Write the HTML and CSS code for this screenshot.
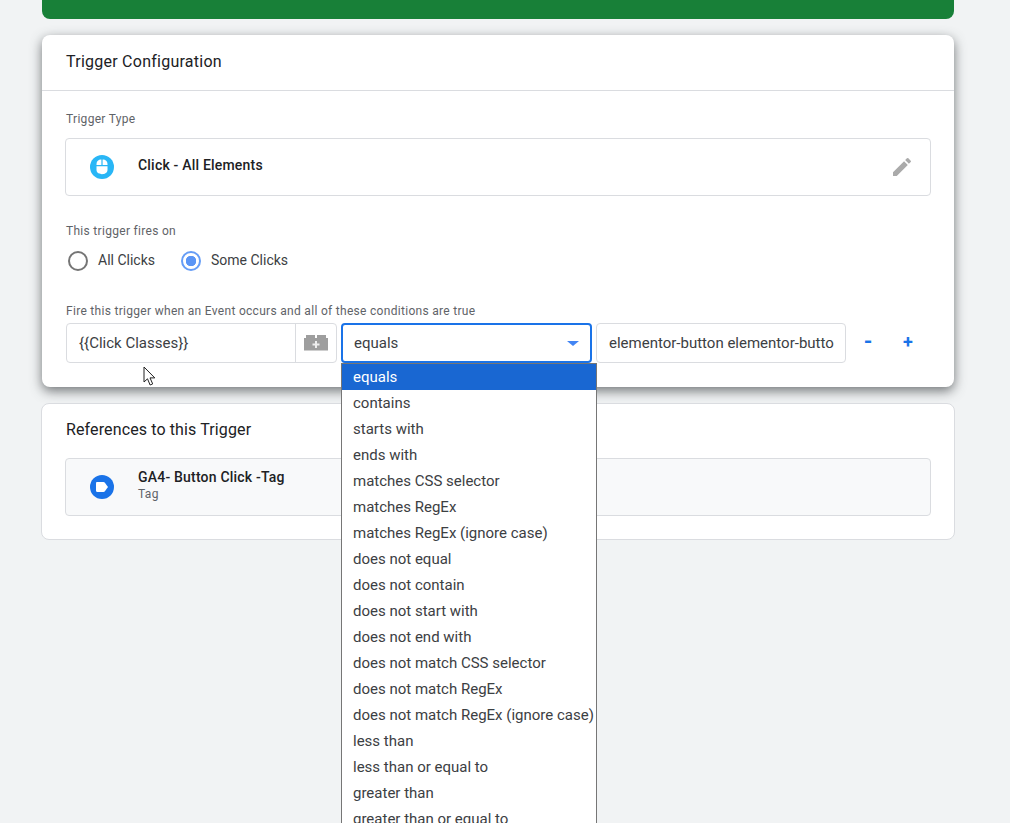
FILE: index.html
```html
<!DOCTYPE html>
<html lang="en">
<head>
<meta charset="utf-8">
<title>Trigger Configuration</title>
<link rel="stylesheet" href="styles.css">
</head>
<body>
<main class="page">
  <div class="banner"></div>

  <section class="card card-raised">
    <h2 class="card-head">Trigger Configuration</h2>
    <div class="card-body">
      <div class="label label-type">Trigger Type</div>
      <div class="type-box">
        <span class="circle circle-click">
          <svg width="14" height="16" viewBox="0 0 14 16"><path fill="#fff" d="M6.400 .6H6C3.600 .6 1.500 2.400 1.500 5v1h4.900zM7.600 .6H8c2.400 0 4.500 1.800 4.500 4.400v1H7.600zM1.500 7.200h11V11c0 2.400-2.500 4.200-5.500 4.200S1.500 13.400 1.500 11z"/></svg>
        </span>
        <span class="type-name">Click - All Elements</span>
        <svg class="pencil" width="24" height="24" viewBox="0 0 24 24"><path fill="#aaa" d="M3 17.250V21h3.750L17.810 9.940l-3.750-3.750L3 17.250zM20.710 7.040a1 1 0 0 0 0-1.410l-2.340-2.340a1 1 0 0 0-1.410 0l-1.830 1.830 3.750 3.750 1.830-1.830z"/></svg>
      </div>

      <div class="label label-fires">This trigger fires on</div>
      <div class="radios">
        <span class="radio"></span><span class="radio-text">All Clicks</span>
        <span class="radio radio-on"></span><span class="radio-text">Some Clicks</span>
      </div>

      <div class="label label-cond">Fire this trigger when an Event occurs and all of these conditions are true</div>
      <div class="cond-row">
        <div class="var-field">
          <span class="var-text">{{Click Classes}}</span>
          <span class="var-btn">
            <svg width="24" height="16" viewBox="0 0 24 16"><path fill="#9e9e9e" d="M2 0h9v3h2V0h9v3h2v12.500H0V3h2z"/><path fill="#eee" d="M11 6h2v2.500h2.500v2H13V13h-2v-2.500H8.500v-2H11z"/></svg>
          </span>
        </div>
        <div class="select-wrap">
          <div class="select-box">
            <span>equals</span>
            <span class="arrow"></span>
          </div>
          <ul class="menu">
            <li class="menu-on">equals</li>
            <li>contains</li>
            <li>starts with</li>
            <li>ends with</li>
            <li>matches CSS selector</li>
            <li>matches RegEx</li>
            <li>matches RegEx (ignore case)</li>
            <li>does not equal</li>
            <li>does not contain</li>
            <li>does not start with</li>
            <li>does not end with</li>
            <li>does not match CSS selector</li>
            <li>does not match RegEx</li>
            <li>does not match RegEx (ignore case)</li>
            <li>less than</li>
            <li>less than or equal to</li>
            <li>greater than</li>
            <li>greater than or equal to</li>
          </ul>
        </div>
        <div class="value-field">elementor-button elementor-butto</div>
        <div class="pm">
          <span class="pm-btn pm-minus">-</span>
          <span class="pm-btn">+</span>
        </div>
      </div>
    </div>
  </section>

  <section class="card card-flat">
    <h2 class="ref-title">References to this Trigger</h2>
    <div class="ref-box">
      <span class="circle circle-tag">
        <svg width="14" height="12" viewBox="0 0 14 12"><path fill="#fff" d="M2.200 1h6.300c.5 0 .9.200 1.200.500L13 6l-3.300 4.500c-.3.300-.7.500-1.200.500H2.200C1.500 11 1 10.500 1 9.800V2.200C1 1.500 1.500 1 2.200 1z"/></svg>
      </span>
      <span class="ref-text">
        <span class="ref-name">GA4- Button Click -Tag</span>
        <span class="ref-sub">Tag</span>
      </span>
    </div>
  </section>
</main>

<svg class="pointer" width="14" height="21" viewBox="0 0 14 21"><path fill="#fff" stroke="#222" stroke-width="1" d="M1 1v15l3.500-3.200 2.600 6.200 2.600-1.100-2.700-6h4.800z"/></svg>
</body>
</html>
```
FILE: styles.css
```css
html, body {
  margin: 0;
  height: 823px;
  overflow: hidden;
  background: #f1f3f4;
  font-family: Roboto, "Liberation Sans", sans-serif;
  color: #202124;
}
.page {
  width: 912px;
  margin-left: 42px;
  display: flex;
  flex-direction: column;
}
.banner {
  height: 19px;
  background: #188038;
  border-radius: 0 0 8px 8px;
  margin-bottom: 16px;
}
.card {
  background: #fff;
  border-radius: 8px;
}
.card-raised {
  box-shadow: 0 4px 12px rgba(60, 64, 67, .7);
  margin-bottom: 16px;
}
.card-flat {
  margin-left: -1px;
  width: 914px;
  box-sizing: border-box;
  border: 1px solid #dadce0;
  padding: 0 23px 23px 24px;
}
.card-head {
  margin: 0;
  height: 56px;
  padding-left: 24px;
  line-height: 53px;
  font-size: 16px;
  font-weight: 400;
  letter-spacing: .25px;
  border-bottom: 1px solid #dadce0;
  box-sizing: border-box;
}
.card-body {
  padding: 0 23px 24px 23px;
}
.label {
  font-size: 12px;
  line-height: 16px;
  color: #5f6368;
  padding-left: 1px;
  letter-spacing: .3px;
}
.label-type { padding-top: 20px; margin-bottom: 11px; }
.label-fires { margin-top: 27px; }
.label-cond { margin-top: 32px; margin-bottom: 4px; }
.type-box, .ref-box {
  height: 58px;
  box-sizing: border-box;
  border: 1px solid #dadce0;
  border-radius: 4px;
  display: flex;
  align-items: center;
  padding-left: 24px;
}
.ref-box { background: #f8f9fa; }
.circle {
  width: 24px;
  height: 24px;
  border-radius: 50%;
  flex: none;
  display: flex;
  align-items: center;
  justify-content: center;
  margin-right: 24px;
}
.circle-click { background: #29b6f6; }
.circle-tag { background: #1a73e8; }
.type-name, .ref-name {
  font-size: 14px;
  font-weight: 500;
  letter-spacing: .2px;
  color: #202124;
}
.type-name { flex: 1; padding-bottom: 4px; }
.pencil { margin-right: 16px; }
.radios {
  display: flex;
  align-items: center;
  height: 20px;
  margin-top: 12px;
  padding-left: 3px;
}
.radio {
  width: 20px;
  height: 20px;
  box-sizing: border-box;
  border: 2px solid #757575;
  border-radius: 50%;
  flex: none;
  margin-right: 10px;
}
.radio-on {
  border-color: #669df6;
  background: radial-gradient(circle, #5b95f5 0 5px, #fff 5.500px);
}
.radio-text {
  font-size: 14px;
  color: #3c4043;
  margin-right: 26px;
  padding-bottom: 2px;
}
.cond-row {
  display: flex;
  align-items: flex-start;
  height: 40px;
  padding-left: 1px;
}
.var-field {
  width: 271px;
  height: 40px;
  box-sizing: border-box;
  border: 1px solid #dadce0;
  border-radius: 4px;
  display: flex;
  margin-right: 4px;
}
.var-text {
  flex: 1;
  padding-left: 12px;
  font-size: 15px;
  line-height: 38px;
  color: #3c4043;
}
.var-btn {
  width: 40px;
  border-left: 1px solid #dadce0;
  display: flex;
  align-items: center;
  justify-content: center;
}
.select-wrap {
  position: relative;
  width: 251px;
  margin-right: 4px;
  flex: none;
}
.select-box {
  height: 40px;
  box-sizing: border-box;
  border: 2px solid #1a73e8;
  border-radius: 4px;
  display: flex;
  align-items: center;
  justify-content: space-between;
  padding: 0 11px 0 11px;
  font-size: 15px;
  color: #3c4043;
}
.arrow {
  width: 0;
  height: 0;
  border-left: 6px solid transparent;
  border-right: 6px solid transparent;
  border-top: 5px solid #4285f4;
}
.menu {
  position: absolute;
  left: 0;
  top: 40px;
  width: 256px;
  box-sizing: border-box;
  margin: 0;
  padding: 0;
  list-style: none;
  background: #fff;
  border: 1px solid #767676;
  font-size: 15px;
  color: #3c4043;
  z-index: 2;
}
.menu li {
  height: 26px;
  line-height: 26px;
  padding-left: 11px;
  white-space: nowrap;
}
.menu .menu-on {
  background: #1967d2;
  color: #fff;
}
.value-field {
  width: 250px;
  height: 40px;
  box-sizing: border-box;
  border: 1px solid #dadce0;
  border-radius: 4px;
  padding: 0 12px;
  white-space: nowrap;
  font-size: 15px;
  line-height: 38px;
  color: #3c4043;
  flex: none;
}
.pm {
  display: flex;
  flex: none;
  padding-left: 2px;
}
.pm-btn {
  width: 40px;
  height: 37px;
  display: flex;
  align-items: center;
  justify-content: center;
  color: #1a73e8;
  font-size: 18px;
  font-weight: 700;
}
.pm-minus { font-size: 22px; }
.ref-title {
  margin: 0;
  font-size: 16px;
  font-weight: 400;
  line-height: 20px;
  padding-top: 16px;
  margin-bottom: 18px;
  letter-spacing: .12px;
  color: #202124;
}
.ref-box { margin-left: -1px; }
.ref-text { display: flex; flex-direction: column; padding-bottom: 2px; }
.ref-name { line-height: 17px; }
.ref-sub { font-size: 12px; line-height: 17px; color: #5f6368; letter-spacing: .3px; }
.pointer {
  position: absolute;
  left: 143px;
  top: 366px;
  z-index: 3;
}
```
